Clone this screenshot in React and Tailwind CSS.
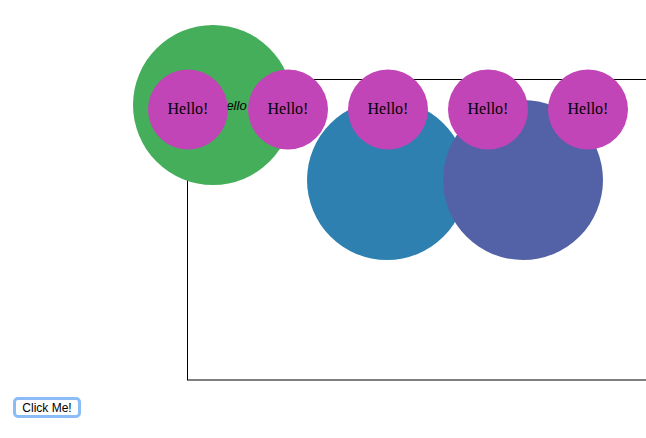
export default function App() {
  return (
    <div className="w-[646px] h-[438px] bg-white overflow-hidden flex flex-col">
      <svg width="646" height="397" className="block shrink-0">
        <rect x="187.5" y="79.5" width="600" height="300.5" fill="none" stroke="#000" strokeWidth="1" />
        <circle cx="213" cy="105" r="80" fill="#45ae5a" />
        <text x="217" y="110" fontFamily="'Liberation Sans', Arial, sans-serif" fontSize="13" fontStyle="italic" fill="#000">Hello</text>
        <circle cx="387" cy="180" r="80" fill="#2e80b1" />
        <circle cx="523" cy="180" r="80" fill="#5362a6" />
        {[188, 288, 388, 488, 588].map((cx) => (
          <g key={cx}>
            <circle cx={cx} cy="109.5" r="40" fill="#c145b7" />
            <text x={cx} y="114" textAnchor="middle" fontFamily="'Liberation Serif', 'Times New Roman', serif" fontSize="16" fill="#000">Hello!</text>
          </g>
        ))}
      </svg>
      <div className="pl-[13px]">
        <button className="h-[21px] w-[68px] rounded-[5px] border-[3px] border-[#8cbcf5] bg-white text-[12px] leading-none text-black flex items-center justify-center" style={{ fontFamily: "'Liberation Sans', Arial, sans-serif" }}>
          Click Me!
        </button>
      </div>
    </div>
  );
}
